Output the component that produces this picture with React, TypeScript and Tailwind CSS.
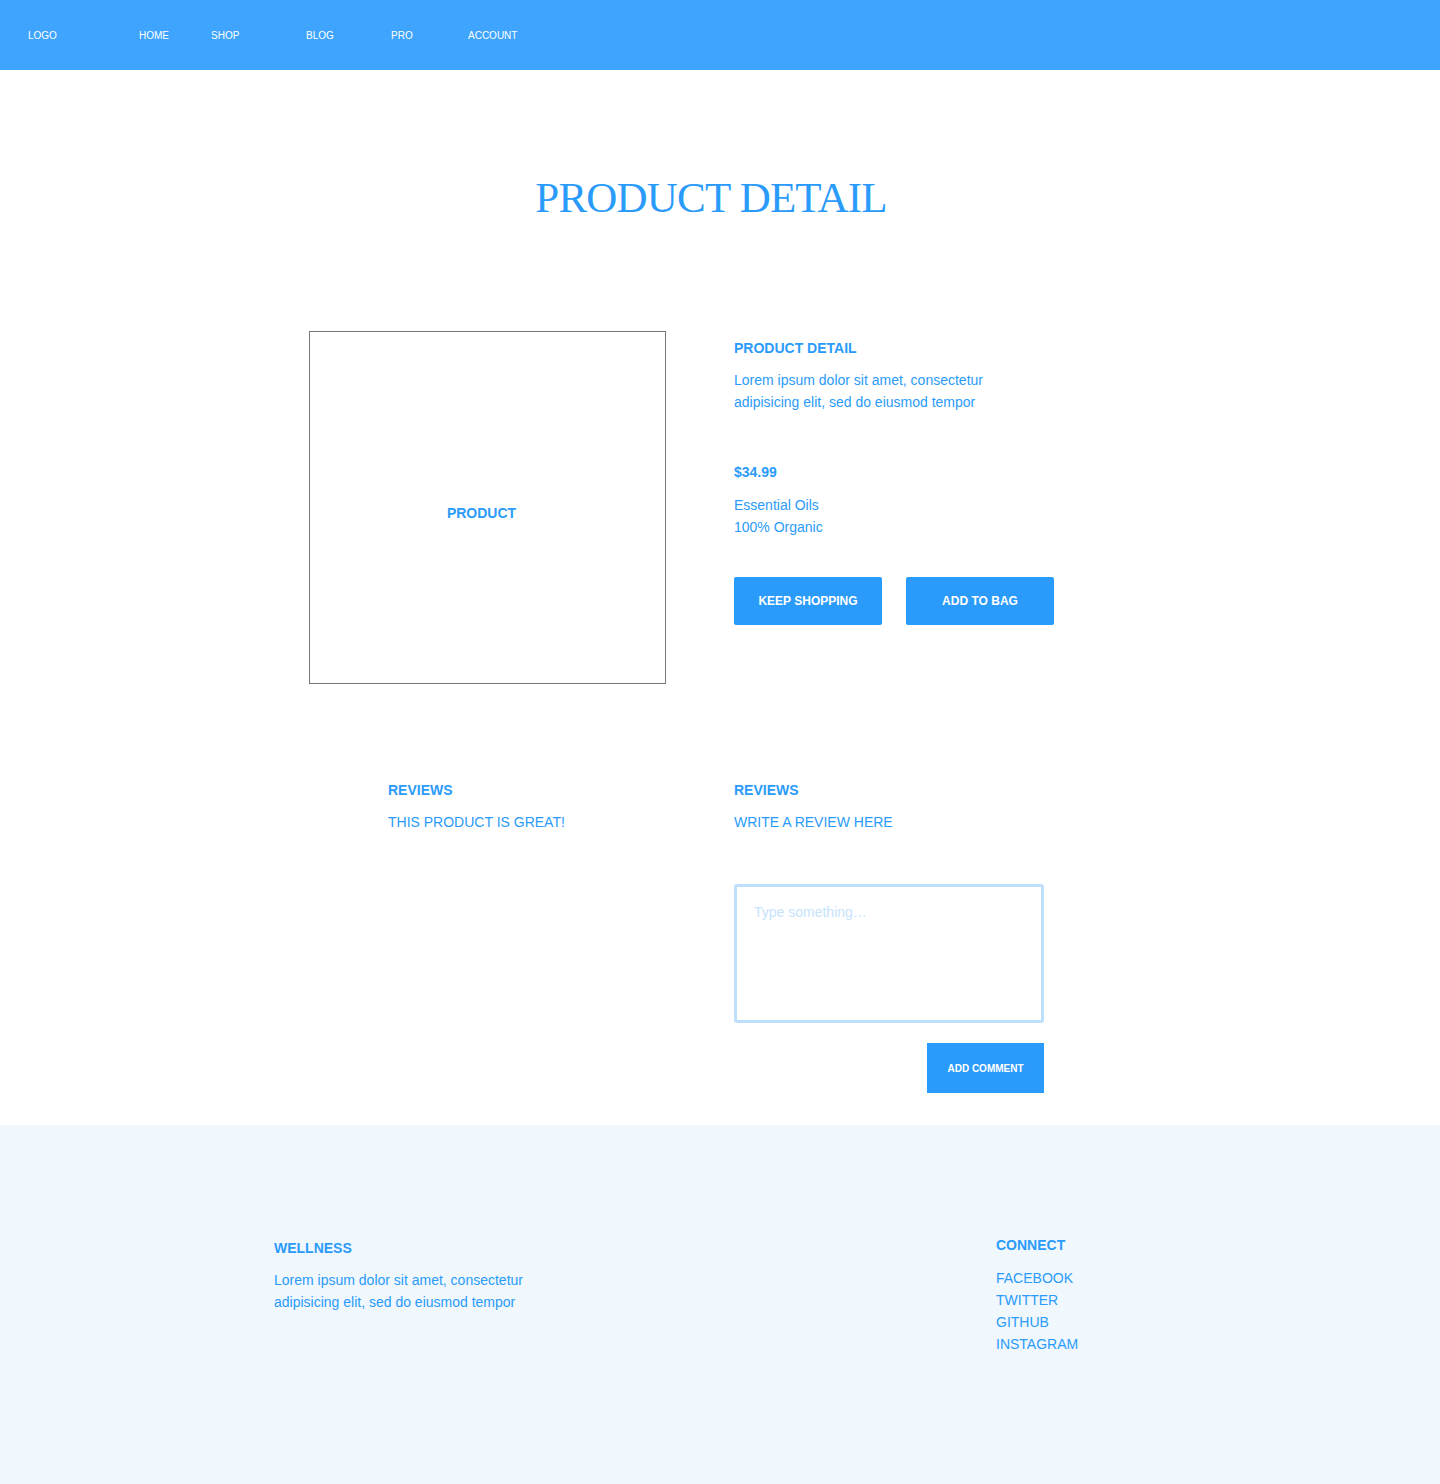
export default function App() {
  const font = { fontFamily: '"Liberation Sans", Arial, sans-serif' };
  return (
    <div className="min-h-[1484px] bg-white text-[#2a9bfa]" style={font}>
      {/* nav */}
      <nav className="h-[70px] bg-[#3ea4fd] flex items-center pl-[28px] text-[10px] text-white">
        <span className="w-[111px]">LOGO</span>
        <span className="w-[72px]">HOME</span>
        <span className="w-[95px]">SHOP</span>
        <span className="w-[85px]">BLOG</span>
        <span className="w-[77px]">PRO</span>
        <span>ACCOUNT</span>
      </nav>

      {/* title */}
      <section className="pt-[106px] pr-[18px]">
        <h1
          className="text-center text-[43px] leading-none tracking-[-0.8px]"
          style={{ fontFamily: '"Liberation Serif", "Times New Roman", serif' }}
        >
          PRODUCT DETAIL
        </h1>
      </section>

      {/* product */}
      <section className="w-[822px] mx-auto mt-[112px] flex gap-[68px]">
        <div className="w-[357px] h-[353px] border border-[#777] flex items-center justify-center">
          <span className="text-sm font-bold -ml-[12px] mt-[10px]">PRODUCT</span>
        </div>
        <div className="flex-1 pt-[6px]">
          <h2 className="text-sm font-bold leading-[22px]">PRODUCT DETAIL</h2>
          <p className="mt-[10px] text-sm leading-[22px]">
            Lorem ipsum dolor sit amet, consectetur
            <br />
            adipisicing elit, sed do eiusmod tempor
          </p>
          <p className="mt-[49px] text-sm font-bold leading-[20px]">$34.99</p>
          <p className="mt-[12px] text-sm leading-[22px]">
            Essential Oils
            <br />
            100% Organic
          </p>
          <div className="mt-[39px] flex gap-[24px]">
            <button className="w-[148px] h-[48px] rounded-[2px] bg-[#2a9bfa] text-white text-xs font-bold">
              KEEP SHOPPING
            </button>
            <button className="w-[148px] h-[48px] rounded-[2px] bg-[#2a9bfa] text-white text-xs font-bold">
              ADD TO BAG
            </button>
          </div>
        </div>
      </section>

      {/* reviews */}
      <section className="w-[822px] mx-auto mt-[95px] pl-[79px] pb-[32px] flex">
        <div className="w-[346px]">
          <h3 className="text-sm font-bold leading-[22px]">REVIEWS</h3>
          <p className="mt-[10px] text-sm leading-[22px]">THIS PRODUCT IS GREAT!</p>
        </div>
        <div className="w-[310px]">
          <h3 className="text-sm font-bold leading-[22px]">REVIEWS</h3>
          <p className="mt-[10px] text-sm leading-[22px]">WRITE A REVIEW HERE</p>
          <textarea
            placeholder="Type something…"
            className="mt-[51px] block w-[310px] h-[139px] border-[3px] border-[#bfe0fd] rounded-[3px] px-[17px] pt-[15px] text-sm leading-[20px] resize-none outline-none placeholder:text-[#c6e3fd]"
          />
          <div className="mt-[20px] flex justify-end">
            <button className="w-[117px] h-[50px] bg-[#2a9bfa] text-white text-[10px] font-bold">
              ADD COMMENT
            </button>
          </div>
        </div>
      </section>

      {/* footer */}
      <footer className="h-[359px] bg-[#f0f7fd]">
        <div className="w-[892px] mx-auto pt-[109px] flex justify-between">
          <div className="pt-[3px]">
            <h4 className="text-sm font-bold leading-[22px]">WELLNESS</h4>
            <p className="mt-[10px] text-sm leading-[22px]">
              Lorem ipsum dolor sit amet, consectetur
              <br />
              adipisicing elit, sed do eiusmod tempor
            </p>
          </div>
          <div className="w-[170px]">
            <h4 className="text-sm font-bold leading-[22px]">CONNECT</h4>
            <ul className="mt-[11px] text-sm leading-[22px]">
              <li>FACEBOOK</li>
              <li>TWITTER</li>
              <li>GITHUB</li>
              <li>INSTAGRAM</li>
            </ul>
          </div>
        </div>
      </footer>
    </div>
  );
}
